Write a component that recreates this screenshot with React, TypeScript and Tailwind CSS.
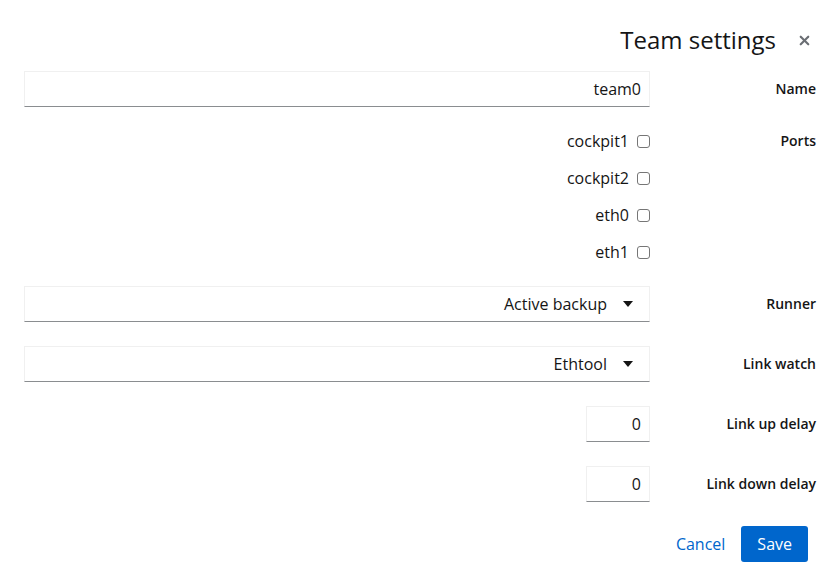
import { X } from "lucide-react";

const ports = ["cockpit1", "cockpit2", "eth0", "eth1"];

function Label({ children }: { children: React.ReactNode }) {
  return <div className="text-right text-sm font-semibold text-[#151515]">{children}</div>;
}

function Select({ value }: { value: string }) {
  return (
    <div className="flex h-9 w-full items-center justify-end gap-4 border border-[#f0f0f0] border-b-[#8a8d90] pr-4 text-base text-[#151515]">
      <span>{value}</span>
      <svg width="10" height="6" viewBox="0 0 10 6">
        <path d="M0 0h10L5 6z" fill="#151515" />
      </svg>
    </div>
  );
}

export default function App() {
  return (
    <main
      className="flex h-[586px] w-[840px] flex-col bg-white px-6 pt-6 text-[#151515]"
      style={{ fontFamily: '"Open Sans", sans-serif' }}
    >
      <header className="flex h-[32px] items-center justify-end gap-4">
        <h1 className="text-2xl leading-8">Team settings</h1>
        <button className="flex w-6 justify-center text-[#6a6e73]">
          <X size={15} strokeWidth={3.5} />
        </button>
      </header>

      <section className="mt-[15px] grid grid-cols-[1fr_150px] items-center gap-x-4 gap-y-6">
        <input
          readOnly
          value="team0"
          className="h-9 w-full border border-[#f0f0f0] border-b-[#8a8d90] px-2 text-right text-base outline-none"
        />
        <Label>Name</Label>

        <div className="-mt-px mb-[-1px] flex flex-col items-end gap-[15px]">
          {ports.map((p) => (
            <label key={p} className="flex h-[22px] items-center gap-2 text-base">
              <span>{p}</span>
              <span className="h-[13px] w-[13px] rounded-[3px] border border-[#767676]" />
            </label>
          ))}
        </div>
        <div className="-mt-px flex h-[22px] items-center justify-end self-start">
          <Label>Ports</Label>
        </div>

        <Select value="Active backup" />
        <Label>Runner</Label>

        <Select value="Ethtool" />
        <Label>Link watch</Label>

        <div className="flex justify-end">
          <input
            readOnly
            value="0"
            className="h-9 w-16 border border-[#f0f0f0] border-b-[#8a8d90] px-2 text-right text-base outline-none"
          />
        </div>
        <Label>Link up delay</Label>

        <div className="flex justify-end">
          <input
            readOnly
            value="0"
            className="h-9 w-16 border border-[#f0f0f0] border-b-[#8a8d90] px-2 text-right text-base outline-none"
          />
        </div>
        <Label>Link down delay</Label>
      </section>

      <footer className="mt-6 flex justify-end gap-4 pr-2">
        <button className="px-0 text-base text-[#0066cc]">Cancel</button>
        <button className="h-9 rounded-[3px] bg-[#0066cc] px-4 text-base text-white">Save</button>
      </footer>
    </main>
  );
}
